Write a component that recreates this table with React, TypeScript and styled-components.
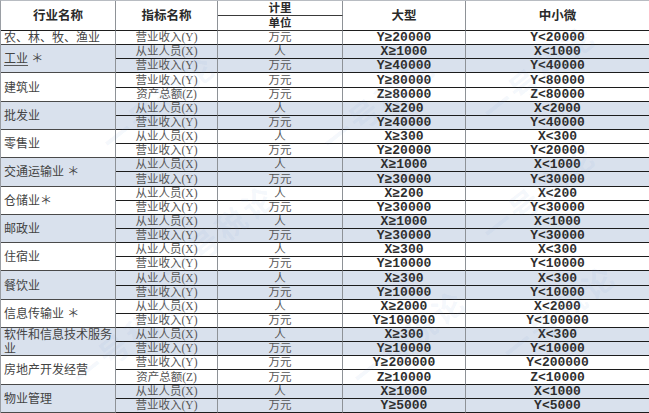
import { Fragment } from 'react';
import styled, { createGlobalStyle } from 'styled-components';

const GlobalStyle = createGlobalStyle`
  html, body {
    margin: 0;
    padding: 0;
    background: #ffffff;
  }
  body {
    font-family: "Noto Sans CJK SC", "Liberation Sans", sans-serif;
  }
`;

const BLUE = '#d9e1ed';
const WHITE = '#ffffff';

type Row = [string, string, string, string];
type Group = { name: string; link?: string; star?: string; blue: boolean; rows: Row[] };

const groups: Group[] = [
  { name: '农、林、牧、渔业', blue: false, rows: [['营业收入(Y)', '万元', 'Y≥20000', 'Y<20000']] },
  {
    name: '', link: '工业', star: ' ＊', blue: true,
    rows: [
      ['从业人员(X)', '人', 'X≥1000', 'X<1000'],
      ['营业收入(Y)', '万元', 'Y≥40000', 'Y<40000'],
    ],
  },
  {
    name: '建筑业', blue: false,
    rows: [
      ['营业收入(Y)', '万元', 'Y≥80000', 'Y<80000'],
      ['资产总额(Z)', '万元', 'Z≥80000', 'Z<80000'],
    ],
  },
  {
    name: '批发业', blue: true,
    rows: [
      ['从业人员(X)', '人', 'X≥200', 'X<2000'],
      ['营业收入(Y)', '万元', 'Y≥40000', 'Y<40000'],
    ],
  },
  {
    name: '零售业', blue: false,
    rows: [
      ['从业人员(X)', '人', 'X≥300', 'X<300'],
      ['营业收入(Y)', '万元', 'Y≥20000', 'Y<20000'],
    ],
  },
  {
    name: '交通运输业 ＊', blue: true,
    rows: [
      ['从业人员(X)', '人', 'X≥1000', 'X<1000'],
      ['营业收入(Y)', '万元', 'Y≥30000', 'Y<30000'],
    ],
  },
  {
    name: '仓储业＊', blue: false,
    rows: [
      ['从业人员(X)', '人', 'X≥200', 'X<200'],
      ['营业收入(Y)', '万元', 'Y≥30000', 'Y<30000'],
    ],
  },
  {
    name: '邮政业', blue: true,
    rows: [
      ['从业人员(X)', '人', 'X≥1000', 'X<1000'],
      ['营业收入(Y)', '万元', 'Y≥30000', 'Y<30000'],
    ],
  },
  {
    name: '住宿业', blue: false,
    rows: [
      ['从业人员(X)', '人', 'X≥300', 'X<300'],
      ['营业收入(Y)', '万元', 'Y≥10000', 'Y<10000'],
    ],
  },
  {
    name: '餐饮业', blue: true,
    rows: [
      ['从业人员(X)', '人', 'X≥300', 'X<300'],
      ['营业收入(Y)', '万元', 'Y≥10000', 'Y<10000'],
    ],
  },
  {
    name: '信息传输业 ＊', blue: false,
    rows: [
      ['从业人员(X)', '人', 'X≥2000', 'X<2000'],
      ['营业收入(Y)', '万元', 'Y≥100000', 'Y<100000'],
    ],
  },
  {
    name: '软件和信息技术服务业', blue: true,
    rows: [
      ['从业人员(X)', '人', 'X≥300', 'X<300'],
      ['营业收入(Y)', '万元', 'Y≥10000', 'Y<10000'],
    ],
  },
  {
    name: '房地产开发经营', blue: false,
    rows: [
      ['营业收入(Y)', '万元', 'Y≥200000', 'Y<200000'],
      ['资产总额(Z)', '万元', 'Z≥10000', 'Z<10000'],
    ],
  },
  {
    name: '物业管理', blue: true,
    rows: [
      ['从业人员(X)', '人', 'X≥1000', 'X<1000'],
      ['营业收入(Y)', '万元', 'Y≥5000', 'Y<5000'],
    ],
  },
];

const Page = styled.div`
  position: relative;
  width: 649px;
  height: 413px;
  overflow: hidden;
  background: #ffffff;
`;

const Grid = styled.div`
  display: grid;
  grid-template-columns: 115px 102px 125px 123px 184px;
  grid-template-rows: 15px 15px repeat(27, 14.15px);
  border-top: 1px solid #b8bcc2;
  border-left: 1px solid #9a9ea4;
  box-sizing: border-box;
  width: 649px;
`;

const HeadCell = styled.div<{ $rows?: number; $half?: boolean; $col?: number }>`
  grid-row: span ${(p) => p.$rows ?? 2};
  ${(p) => (p.$col ? `grid-column: ${p.$col};` : '')}
  display: flex;
  align-items: center;
  justify-content: center;
  box-sizing: border-box;
  border-right: 1px solid #8e9297;
  border-bottom: 1px solid ${(p) => (p.$half ? '#3a3a3a' : '#1e1e1e')};
  font-family: "Liberation Sans", "Noto Sans CJK SC", sans-serif;
  font-weight: 700;
  font-size: ${(p) => (p.$half ? '11.5px' : '12.5px')};
  line-height: 13px;
  color: #2a2a2a;
  background: #ffffff;
  padding-top: ${(p) => (p.$half ? '1px' : '2px')};
`;

const NameCell = styled.div<{ $rows: number; $blue: boolean }>`
  grid-row: span ${(p) => p.$rows};
  display: flex;
  align-items: center;
  box-sizing: border-box;
  padding: 1px 2px 0 3px;
  border-right: 1px solid #8e9297;
  border-bottom: 1px solid #4a4a4a;
  background: ${(p) => (p.$blue ? BLUE : WHITE)};
  font-family: "Liberation Sans", "Noto Sans CJK SC", sans-serif;
  font-size: 12px;
  line-height: 14px;
  color: #444444;
  word-break: break-all;
`;

const Link = styled.span`
  text-decoration: underline;
  text-decoration-color: #5a5a5a;
  text-underline-offset: 2px;
`;

const Cell = styled.div<{ $blue: boolean; $col?: number }>`
  ${(p) => (p.$col ? `grid-column: ${p.$col};` : '')}
  display: flex;
  align-items: flex-end;
  justify-content: center;
  box-sizing: border-box;
  border-right: 1px solid #8e9297;
  border-bottom: 1px solid #1c1c1c;
  background: ${(p) => (p.$blue ? BLUE : WHITE)};
  white-space: nowrap;
`;

const Label = styled.span`
  display: inline-block;
  height: 13px;
  line-height: 13px;
  font-family: "Liberation Serif", "Noto Sans CJK SC", serif;
  font-size: 11.5px;
  color: #555555;
`;

const Value = styled.span`
  display: inline-block;
  height: 13px;
  line-height: 13px;
  font-family: "Liberation Mono", "DejaVu Sans Mono", monospace;
  font-weight: 700;
  font-size: 13px;
  color: #2e2e2e;
`;

const Watermark = styled.div<{ $x: number; $y: number }>`
  position: absolute;
  left: ${(p) => p.$x}px;
  top: ${(p) => p.$y}px;
  transform: rotate(-38deg);
  font-family: "Noto Sans CJK SC", sans-serif;
  font-size: 30px;
  font-weight: 700;
  letter-spacing: 4px;
  color: rgba(110, 150, 210, 0.08);
  pointer-events: none;
  white-space: nowrap;
`;

const marks = [
  { x: 470, y: 50 },
  { x: 90, y: 80 },
  { x: 470, y: 170 },
  { x: 150, y: 210 },
  { x: 310, y: 80 },
  { x: 490, y: 290 },
  { x: 60, y: 315 },
  { x: 340, y: 315 },
];

export default function App() {
  return (
    <Page>
      <GlobalStyle />
      <Grid>
        <HeadCell>行业名称</HeadCell>
        <HeadCell>指标名称</HeadCell>
        <HeadCell $rows={1} $half>计里</HeadCell>
        <HeadCell>大型</HeadCell>
        <HeadCell>中小微</HeadCell>
        <HeadCell $rows={1} $half $col={3}>单位</HeadCell>

        {groups.map((g, gi) =>
          g.rows.map((r, idx) => (
            <Fragment key={`${gi}-${idx}`}>
              {idx === 0 && (
                <NameCell $rows={g.rows.length} $blue={g.blue}>
                  {g.link ? (
                    <span>
                      <Link>{g.link}</Link>
                      {g.star}
                    </span>
                  ) : (
                    g.name
                  )}
                </NameCell>
              )}
              <Cell $blue={g.blue} $col={2}>
                <Label>{r[0]}</Label>
              </Cell>
              <Cell $blue={g.blue}>
                <Label>{r[1]}</Label>
              </Cell>
              <Cell $blue={g.blue}>
                <Value>{r[2]}</Value>
              </Cell>
              <Cell $blue={g.blue}>
                <Value>{r[3]}</Value>
              </Cell>
            </Fragment>
          ))
        )}
      </Grid>
      {marks.map((m, i) => (
        <Watermark key={i} $x={m.x} $y={m.y}>一号税论</Watermark>
      ))}
    </Page>
  );
}
